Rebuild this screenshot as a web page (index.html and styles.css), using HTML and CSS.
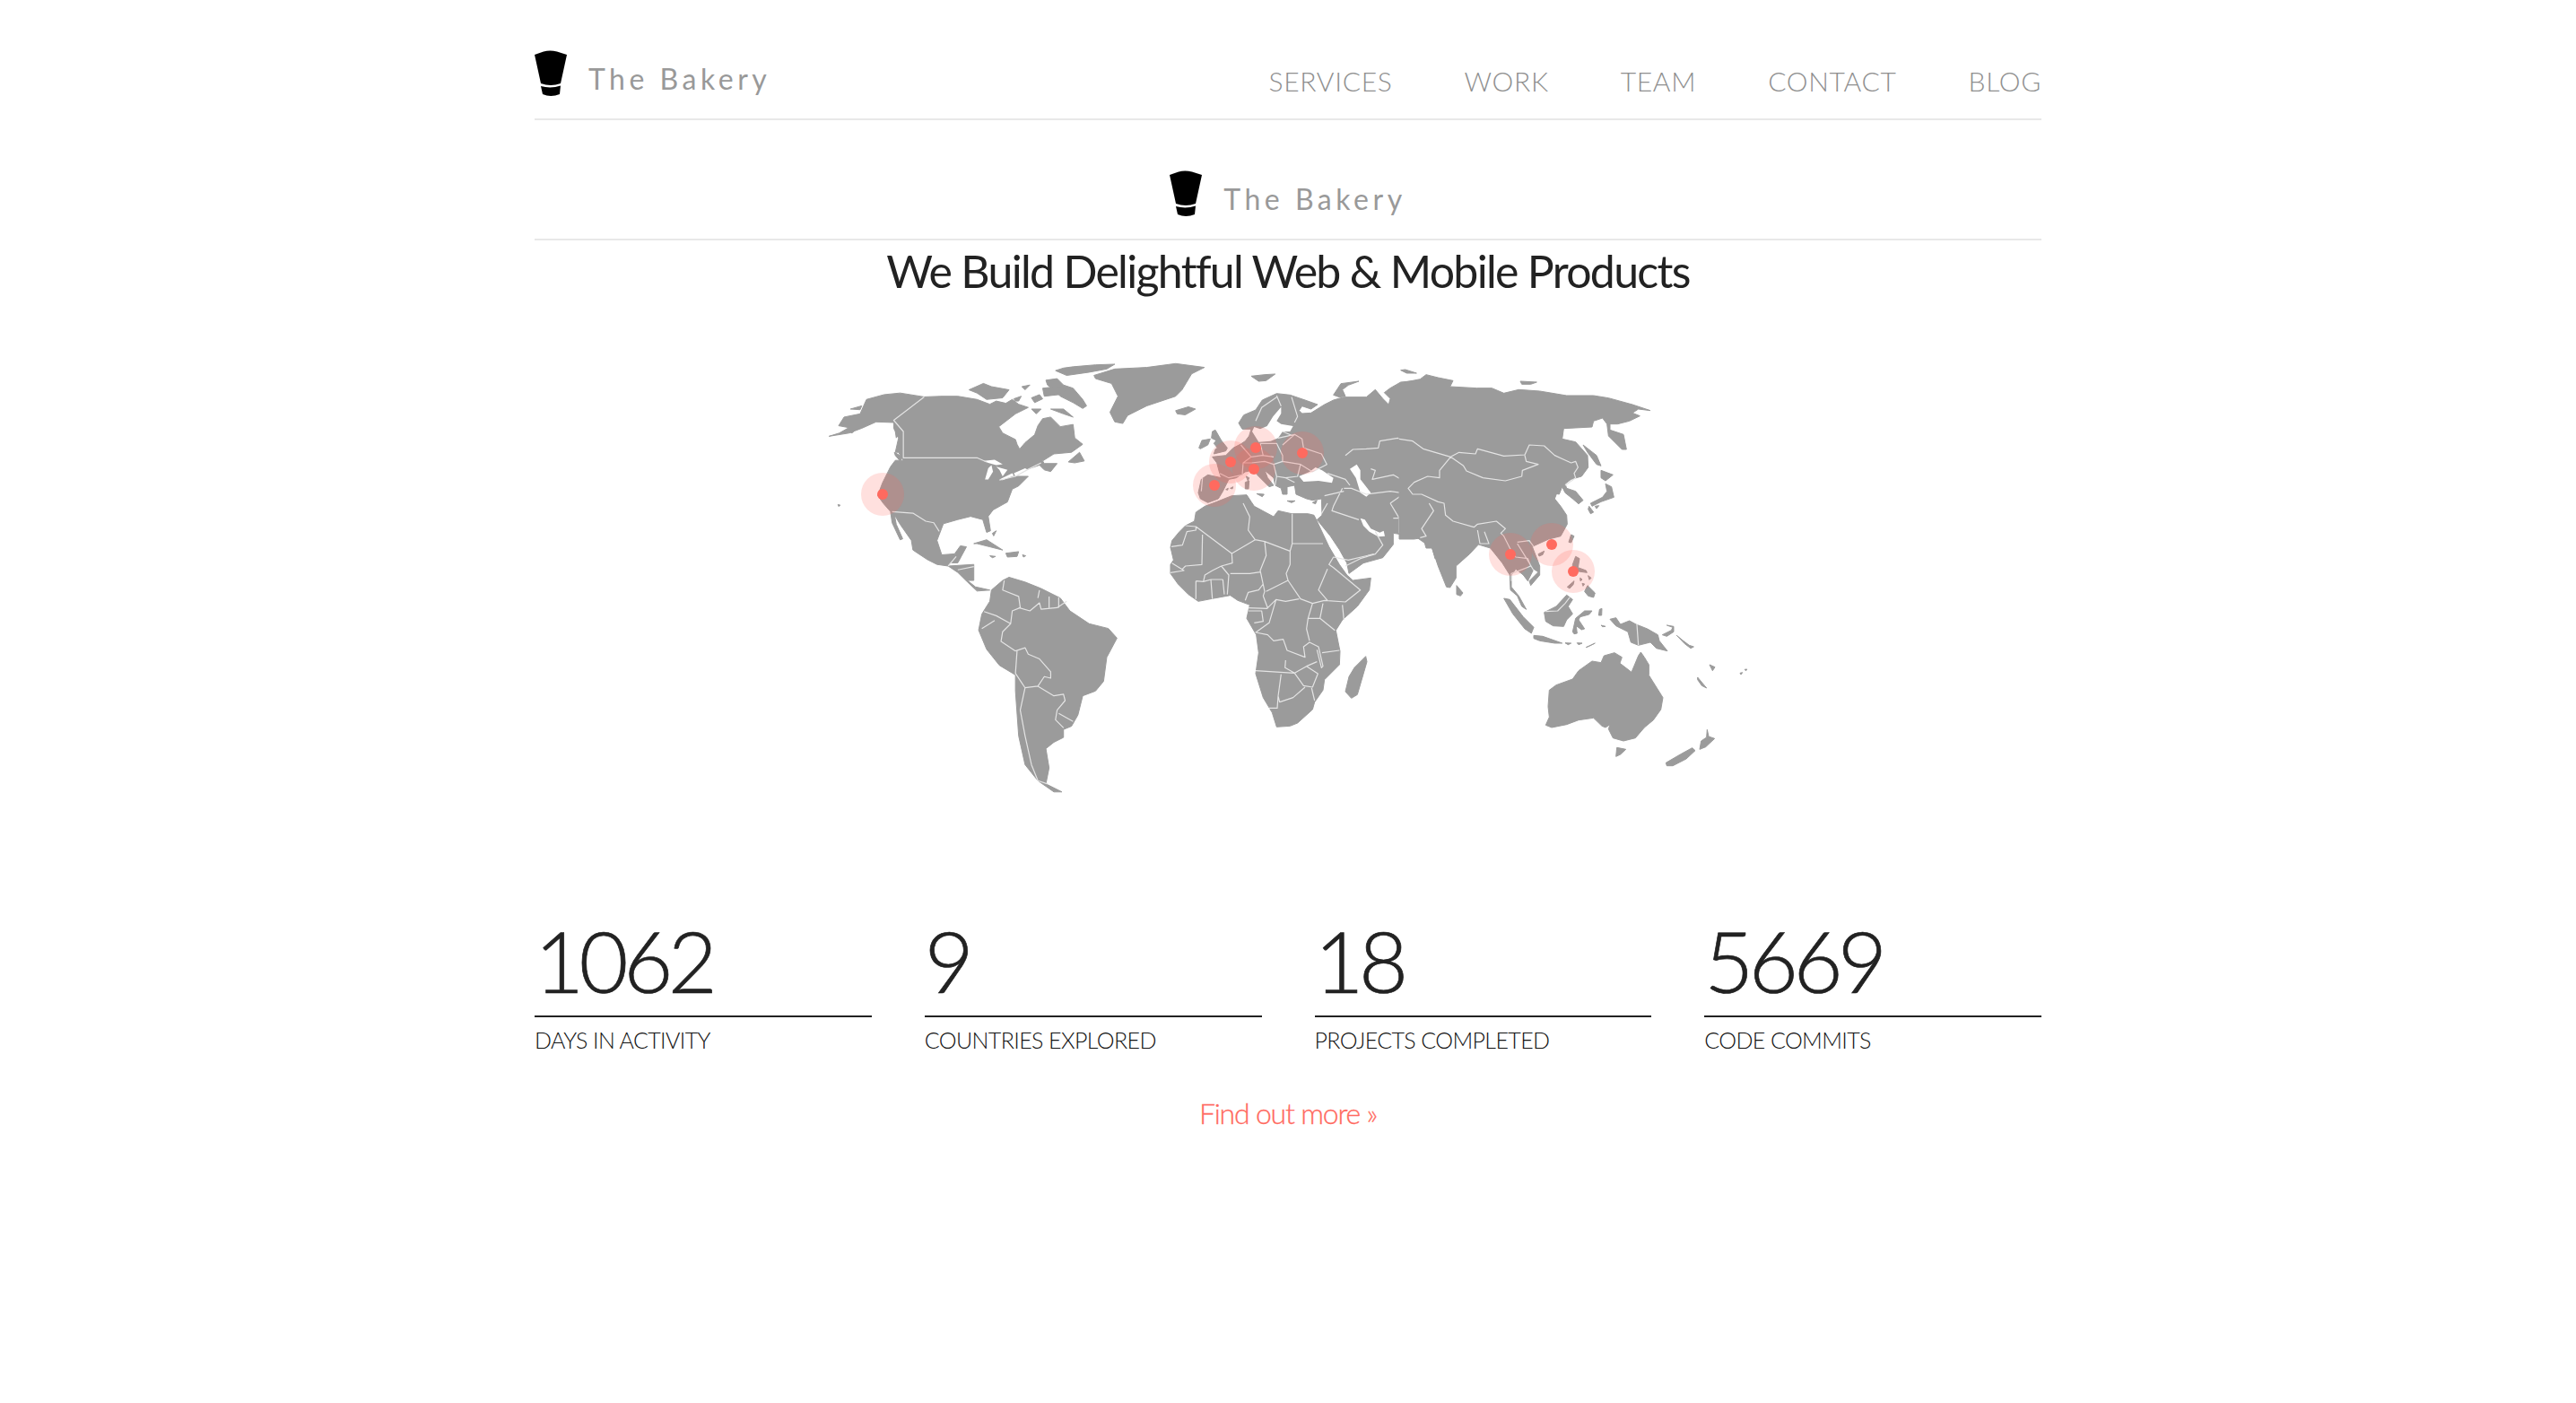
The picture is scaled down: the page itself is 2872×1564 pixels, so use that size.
FILE: index.html
```html
<!DOCTYPE html>
<html lang="en">
<head>
<meta charset="utf-8">
<title>The Bakery</title>
<link rel="stylesheet" href="styles.css">
</head>
<body>
<div class="page">
  <header class="top">
    <a class="brand" href="#">
      <svg class="hat" viewBox="0 0 36 52"><path d="M0 5 10 1.5Q17-.5 25 1.5L36 5 29 37Q18 41 7 37Z"/><path d="M7 40Q18 43 29 39.5L28 49Q18 53 9 49Z"/></svg>
      <span class="brand-name">The Bakery</span>
    </a>
    <nav class="nav">
      <a href="#">SERVICES</a>
      <a href="#">WORK</a>
      <a href="#">TEAM</a>
      <a href="#">CONTACT</a>
      <a href="#">BLOG</a>
    </nav>
  </header>
  <div class="center-brand">
    <a class="brand" href="#">
      <svg class="hat" viewBox="0 0 36 52"><path d="M0 5 10 1.5Q17-.5 25 1.5L36 5 29 37Q18 41 7 37Z"/><path d="M7 40Q18 43 29 39.5L28 49Q18 53 9 49Z"/></svg>
      <span class="brand-name">The Bakery</span>
    </a>
  </div>
  <h1 class="headline">We Build Delightful Web &amp; Mobile Products</h1>

  <svg class="map" viewBox="900 380 1072 560" width="1072" height="560">
    <g transform="translate(900 380) scale(.35714)">
      <path class="land" d="M530 180 570 195 590 185 620 192 640 180 660 195 690 205 650 225 598 265 610 285 650 305 655 320 663 335 680 315 710 290 720 262 735 240 760 235 790 265 830 258 835 300 860 320 825 345 770 350 735 372 740 380 780 380 760 405 740 400 725 385 690 397 640 420 690 420 660 450 640 460 625 500 580 525 565 545 572 590 560 595 548 555 510 545 470 555 425 568 405 620 420 665 460 662 478 637 497 640 470 690 445 690 440 700 520 695 520 745 500 745 525 765 570 775 530 778 495 745 470 720 440 700 405 695 375 680 330 650 325 620 290 570 272 540 278 570 298 615 290 618 265 565 260 530 238 505 220 480 235 440 260 390 275 370 300 370 285 345 275 345 285 300 270 270 270 252 215 250 170 270 130 285 68 295 100 285 130 268 98 262 115 235 165 225 185 180 240 165 290 160 365 172 420 170 470 170Z"/>
      <path class="land" d="M895 105 960 85 1060 80 1150 68 1240 80 1200 100 1170 150 1150 170 1060 200 1000 230 985 255 960 250 945 220 970 170 950 130 900 115Z"/>
      <path class="land" d="M1150 215 1190 203 1212 210 1180 228 1155 225Z"/>
      <path class="land" d="M745 120 780 115 800 135 830 145 860 180 872 200 860 208 830 190 790 170 770 150 750 135Z"/>
      <path class="land" d="M830 78 900 72 960 70 935 85 880 95 810 105 775 90 800 82Z"/>
      <path class="land" d="M505 150 550 130 575 140 630 150 610 175 560 180 530 160Z"/>
      <path class="land" d="M645 178 668 170 660 185 650 185Z"/>
      <path class="land" d="M670 140 695 135 680 150Z"/>
      <path class="land" d="M735 145 780 140 810 150 785 165 740 170Z"/>
      <path class="land" d="M700 210 730 210 715 225Z"/>
      <path class="land" d="M760 210 800 210 830 235 800 225Z"/>
      <path class="land" d="M700 175 725 165 735 178 710 190Z"/>
      <path class="land" d="M815 375 850 345 865 372 835 378Z"/>
      <path class="land" d="M272 345 298 360 290 372 275 355Z"/>
      <path class="land" d="M275 280 285 290 278 300Z"/>
      <path class="land" d="M135 210 170 200 165 212Z"/>
      <path class="land" d="M130 280 150 275 140 285Z"/>
      <path class="land" d="M520 630 560 618 610 650 570 640 530 630Z"/>
      <path class="land" d="M620 660 660 655 655 670 625 672Z"/>
      <path class="land" d="M672 665 682 668 675 672Z"/>
      <path class="land" d="M570 668 588 670 578 674Z"/>
      <path class="land" d="M578 598 590 590 582 606Z"/>
      <path class="land" d="M96 508 103 510 98 514Z"/>
      <path class="land" d="M575 775 610 745 630 735 680 750 730 770 790 800 820 840 880 880 940 895 967 925 935 985 925 1060 900 1090 860 1105 845 1165 825 1200 800 1210 800 1235 770 1250 745 1270 755 1330 745 1380 795 1405 770 1405 720 1370 680 1320 660 1230 650 1090 650 1040 600 1010 560 960 535 900 545 850 570 810Z"/>
      <path class="sea" d="M550 372 585 368 610 382 590 385 565 378Z"/>
      <path class="sea" d="M565 395 575 385 580 405 565 430 555 430Z"/>
      <path class="sea" d="M590 390 625 400 610 420 600 400Z"/>
      <path class="sea" d="M600 430 640 410 645 418 610 432Z"/>
      <path class="sea" d="M645 410 680 395 690 400 650 420Z"/>
      <path class="b" d="M365 172 270 245 300 280 300 362 530 362 560 375M600 432 650 420 690 398 730 378M265 530 330 535 370 560 395 565 412 592M440 700 465 670M470 712 520 702"/>
      <path class="b" d="M615 745 610 775 660 795 665 830 640 840 635 880 610 905 605 935 650 965M660 830 695 840 725 815 730 835 780 830 810 810M725 775 720 800M755 795 755 830M785 798 785 830M552 842 590 855 635 880M545 895 585 870M650 965 680 955 690 975 725 990 760 1030 760 1050 740 1045 720 1075 680 1080 650 1035 655 965M680 1080 665 1150 680 1230 700 1320 720 1370 750 1380M720 1075 770 1105 800 1100 805 1120 780 1150 775 1180 800 1205M785 1160 830 1185"/>
    </g>

    <g transform="translate(1320 400) scale(.33333)">
      <path class="land" d="M48 445 58 400 80 385 125 395 118 375 110 345 95 325 140 320 165 295 190 282 205 272 218 255 225 232 195 232 183 212 200 185 240 168 262 135 310 113 355 118 405 135 447 150 425 165 395 155 385 170 395 180 425 178 470 150 500 135 535 125 610 125 640 100 665 130 685 150 690 130 670 110 690 95 725 75 800 68 840 65 840 665 830 630 775 592 700 580 700 618 665 662 600 680 552 715 545 680 520 635 490 590 445 535 462 520 460 465 430 470 410 465 375 450 370 420 345 425 345 450 330 450 325 430 305 420 300 395 270 370 280 395 300 420 285 425 245 385 235 368 205 375 175 395 150 400 130 440 115 465 80 478 55 465Z"/>
      <path class="land" d="M500 118 525 80 585 72 550 85 530 100 540 122 520 125Z"/>
      <path class="land" d="M225 55 270 50 305 48 275 70 250 72Z"/>
      <path class="land" d="M95 240 105 235 125 270 145 295 140 305 100 315 105 300 112 295 100 280 108 270 92 262Z"/>
      <path class="land" d="M50 295 60 270 88 265 80 285 55 298Z"/>
      <path class="land" d="M243 448 268 450 262 458Z"/>
      <path class="land" d="M205 410 218 405 216 432 205 432Z"/>
      <path class="land" d="M208 390 218 395 214 405Z"/>
      <path class="land" d="M140 434 148 430 146 436Z"/>
      <path class="land" d="M155 430 164 425 162 432Z"/>
      <path class="land" d="M345 472 372 472 360 478Z"/>
      <path class="land" d="M430 478 445 470 440 482Z"/>
      <path class="sea" d="M325 158 298 190 278 222 255 232 235 225 228 240 250 275 290 272 315 262 330 240 355 240 365 222 325 215 310 205 325 180Z"/>
      <path class="sea" d="M385 390 420 375 440 360 462 370 500 395 495 412 450 405 400 408Z"/>
      <path class="sea" d="M555 365 578 350 590 370 590 400 625 445 610 458 590 445 575 395Z"/>
      <path class="sea" d="M590 530 605 535 625 565 655 578 668 572 672 590 650 592 620 575 600 555Z"/>
      <path class="b" d="M540 320 565 300 610 298 650 295 655 272 715 262 770 285 840 320M625 365 640 370 630 400 700 385 760 420 790 420 840 412M480 380 540 400 555 420M535 430 560 430 610 450 690 440 760 450 750 410M690 480 720 530 720 580M690 480 740 445 800 455 790 490 750 530 700 530M790 490 835 470 795 560 810 590 785 595M530 430 500 490 495 505 540 520 585 535M480 480 460 515M470 455 535 440M540 690 590 665 640 650 665 620 640 575M330 285 370 250 395 265 400 295 460 315 478 350 430 375 390 350 330 340M255 280 310 280 330 320 330 340 300 350 270 340 225 345 200 345M190 285 225 325 198 345 195 385 150 395M120 380 150 395M225 325 262 320 300 325M255 280 265 320M300 350 310 390 305 420M330 340 390 350 380 390 340 395 310 390M340 395 370 410M62 395 58 440M310 120 325 155M360 125 380 190 370 210M310 125 260 160 240 205M330 240 365 255M315 262 370 250"/>
    </g>

    <g transform="translate(1300 560) scale(.33333)">
      <path class="land" d="M15 148 20 125 45 95 65 75 95 60 100 30 130 10 170-5 220-25 270-28 285-5 295 10 360 45 375 25 420 35 475 35 495 40 505 60 545 145 580 205 605 240 625 258 685 250 680 290 640 345 590 390 568 425 582 495 580 540 530 590 525 625 497 665 490 690 440 735 415 745 370 748 355 700 325 650 300 570 310 500 302 440 270 385 280 340 240 325 215 308 160 318 108 328 75 305 40 270 15 235 15 205 25 190 18 160Z"/>
      <path class="land" d="M668 512 672 530 640 640 620 652 600 630 612 580 630 550Z"/>
      <path class="b" d="M65 75 100 78 100 90 70 95 55 140 18 145M100 78 220 168 298 122 330 128 415 160 422 135 525 135M258 0 280 45 275 90 298 122M422 35 422 135M122 105 120 205 65 210 55 220M220 168 222 200 185 210 155 225 130 240 125 262M330 128 335 175 315 225 330 295 325 310M415 160 415 205 402 235 408 258 335 295M185 210 210 240 205 305M215 235 280 235 315 230M265 325 275 298 310 290 325 270M408 258 450 320 490 335 530 325 600 330 650 290 560 215 545 205 560 180 610 190 695 170M540 220 510 290 540 325M325 310 340 350 368 322 400 328 445 320M490 335 475 385 470 420 480 460M525 335 515 385 475 385M515 385 565 425M590 340 595 390M368 322 345 400 300 432 340 440 360 460 392 455 405 492 465 515 460 480 480 465 510 480 525 545 520 550 505 490M522 500 580 492M300 560 430 568 470 545 505 530M400 525 398 550 430 568 460 610 490 615 508 570 470 545M385 572 375 645 380 665 425 650 465 615M375 645 372 685 345 685M487 618 497 660M275 350 340 352M275 360 320 360 325 395 295 400M100 260 100 320M150 255 155 320M190 255 195 305M150 255 190 255M100 260 125 262 150 255M20 200 60 225 15 232"/>
    </g>

    <g transform="translate(1560 400) scale(.33333)">
      <path class="land" d="M0 85 20 75 70 65 90 50 130 60 180 70 170 90 260 95 310 95 350 112 400 100 470 105 560 120 650 120 700 128 780 150 840 170 800 165 780 178 805 188 770 205 730 215 705 215 705 235 750 250 760 300 745 300 700 255 695 215 680 195 650 205 645 225 550 230 545 265 590 275 630 320 632 360 610 390 575 400 555 415 560 430 590 440 615 470 600 482 580 465 555 445 545 425 535 450 510 445 495 438 515 415 535 425 520 465 540 490 560 520 562 550 540 590 500 600 445 625 470 690 470 720 440 755 435 740 465 710 450 700 430 740 415 720 390 700 375 720 375 760 400 790 425 835 410 825 395 790 372 770 370 720 345 680 305 630 265 618 235 650 190 690 190 730 170 762 158 760 130 690 110 630 90 630 80 595 50 600 0 600Z"/>
      <path class="land" d="M615 285 660 320 675 355 660 350 630 310Z"/>
      <path class="land" d="M675 370 715 385 690 405 675 395Z"/>
      <path class="land" d="M690 415 710 425 718 460 675 475 645 490 640 480 680 460 695 440Z"/>
      <path class="land" d="M635 490 650 510 640 515 632 500Z"/>
      <path class="land" d="M655 490 668 488 660 498Z"/>
      <path class="land" d="M575 585 585 590 575 612 567 610Z"/>
      <path class="land" d="M465 650 485 640 480 652 468 657Z"/>
      <path class="land" d="M192 755 213 780 205 790 192 785Z"/>
      <path class="land" d="M405 72 460 75 440 82 410 82Z"/>
      <path class="land" d="M5 35 20 33 58 45 25 45Z"/>
      <path class="land" d="M590 658 603 665 598 695 625 705 628 712 600 708 580 700 580 685Z"/>
      <path class="land" d="M630 755 655 780 650 795 632 790 620 775Z"/>
      <path class="land" d="M562 760 585 740 582 752 570 765Z"/>
      <path class="land" d="M605 730 612 735 606 740Z"/>
      <path class="land" d="M612 748 620 750 615 757Z"/>
      <path class="land" d="M632 722 642 730 636 736Z"/>
      <path class="b" d="M172 325 200 310 255 315 262 298 350 322 420 318 435 285 485 288 520 320 575 345 590 340 598 360 585 380 590 395 555 420M0 265 45 272 80 298 172 325M172 325 215 355 225 372 280 395 355 405 410 390 412 370 465 350 425 340 420 320M172 325 135 370 135 395 95 390 50 410 30 430 45 450 75 450 130 475 150 480 155 520 180 540 250 560 262 550 325 540 355 565 340 580 350 590 375 640 390 660 430 665 440 690 415 700 375 715 375 740M395 610 435 605 450 625M395 615 420 655 450 705M100 480 115 505 75 565 90 590 70 595M262 570 270 615 300 615 285 575"/>
    </g>

    <g transform="translate(1620 590) scale(.33333)">
      <path class="land" d="M305 275 345 255 380 217 400 232 385 255 400 280 380 300 370 322 335 320 310 305Z"/>
      <path class="land" d="M170 228 190 232 235 290 270 325 262 345 240 330 200 280Z"/>
      <path class="land" d="M270 352 300 355 365 378 340 378 290 370 270 362Z"/>
      <path class="land" d="M375 377 395 378 385 383Z"/>
      <path class="land" d="M415 377 432 378 420 383Z"/>
      <path class="land" d="M445 392 475 378 455 388Z"/>
      <path class="land" d="M400 340 410 295 440 270 465 270 455 282 425 290 420 300 440 330 430 333 412 320 415 345 405 347Z"/>
      <path class="land" d="M487 285 490 265 498 262 497 285Z"/>
      <path class="land" d="M495 318 510 322 500 323Z"/>
      <path class="land" d="M525 298 545 293 560 315 590 303 612 315 650 330 685 350 690 370 717 404 680 395 660 375 620 385 595 375 585 340 545 320Z"/>
      <path class="land" d="M700 350 730 335 735 325 715 318 738 322 738 340 715 355Z"/>
      <path class="land" d="M748 352 770 370 790 385 805 390 795 395 775 380Z"/>
      <path class="land" d="M858 450 876 458 868 470Z"/>
      <path class="land" d="M818 492 848 528 832 520 818 500Z"/>
      <path class="land" d="M960 478 968 476 963 483Z"/>
      <path class="land" d="M975 466 983 465 980 470Z"/>
      <path class="land" d="M322 535 345 518 400 498 420 470 465 438 495 443 505 420 540 410 565 425 558 445 597 475 620 420 628 408 640 425 655 450 655 485 680 525 702 560 695 600 670 635 640 660 610 695 570 705 535 695 520 665 525 650 510 660 498 655 470 628 420 635 380 650 330 660 310 652 322 625 318 590Z"/>
      <path class="land" d="M548 727 578 733 560 750 545 757Z"/>
      <path class="land" d="M850 667 855 690 875 697 845 725 825 733 830 705 848 693Z"/>
      <path class="land" d="M800 728 810 737 780 765 735 788 715 788 712 778 760 750Z"/>
      <path class="b" d="M310 272 350 270 375 245 390 225M615 315 620 385"/>
    </g>

    <g class="pins">
      <circle class="halo" cx="984" cy="550" r="24"/>
      <circle class="halo" cx="1354" cy="540" r="24"/>
      <circle class="halo" cx="1372" cy="514" r="24"/>
      <circle class="halo" cx="1400" cy="498" r="24"/>
      <circle class="halo" cx="1398" cy="522" r="24"/>
      <circle class="halo" cx="1452" cy="504" r="24"/>
      <circle class="halo" cx="1684" cy="617" r="24"/>
      <circle class="halo" cx="1730" cy="606" r="24"/>
      <circle class="halo" cx="1754" cy="636" r="24"/>
      <circle class="dot" cx="984" cy="550" r="6"/>
      <circle class="dot" cx="1354" cy="540" r="6"/>
      <circle class="dot" cx="1372" cy="514" r="6"/>
      <circle class="dot" cx="1400" cy="498" r="6"/>
      <circle class="dot" cx="1398" cy="522" r="6"/>
      <circle class="dot" cx="1452" cy="504" r="6"/>
      <circle class="dot" cx="1684" cy="617" r="6"/>
      <circle class="dot" cx="1730" cy="606" r="6"/>
      <circle class="dot" cx="1754" cy="636" r="6"/>
    </g>
  </svg>

  <section class="stats">
    <div class="stat"><div class="num">1062</div><div class="label">DAYS IN ACTIVITY</div></div>
    <div class="stat"><div class="num">9</div><div class="label">COUNTRIES EXPLORED</div></div>
    <div class="stat"><div class="num">18</div><div class="label">PROJECTS COMPLETED</div></div>
    <div class="stat"><div class="num">5669</div><div class="label">CODE COMMITS</div></div>
  </section>
  <p class="more"><a href="#">Find out more »</a></p>
</div>
</body>
</html>
```

FILE: styles.css
```css
* { box-sizing: border-box; }
html, body { margin: 0; background: #fff; }
body { font-family: Lato, "Liberation Sans", sans-serif; color: #222; }
a { text-decoration: none; color: inherit; }
.page { width: 1680px; margin: 0 auto; padding-bottom: 280px; }
.top { height: 134px; padding-top: 56px; display: flex; justify-content: space-between; border-bottom: 2px solid #e8e8e8; }
.brand { display: flex; align-items: flex-start; gap: 24px; }
.hat { width: 36px; height: 52px; fill: #000; flex: none; }
.brand-name { font-size: 32px; line-height: 40px; margin-top: 12px; letter-spacing: 4.5px; color: #999; white-space: nowrap; }
.nav { display: flex; gap: 80px; padding-top: 16px; }
.nav a { font-size: 30px; line-height: 36px; font-weight: 300; letter-spacing: .7px; color: #8f8f8f; }
.center-brand { height: 134px; padding-top: 56px; display: flex; justify-content: center; border-bottom: 2px solid #e8e8e8; }
.headline { margin: 0; height: 113px; padding-top: 4px; font-size: 50px; line-height: 60px; font-weight: 400; text-align: center; color: #222; letter-spacing: -1.7px; }
.map { display: block; margin: 0 auto; }
.land { fill: #9b9b9b; stroke: #9b9b9b; stroke-width: 1; stroke-linejoin: round; vector-effect: non-scaling-stroke; }
.sea { fill: #fff; stroke: none; }
.b { fill: none; stroke: #e4e4e4; stroke-width: 1.2; stroke-linejoin: round; vector-effect: non-scaling-stroke; }
.halo { fill: #ff6459; fill-opacity: .2; }
.dot { fill: #ff6a5f; }
.stats { display: grid; grid-template-columns: repeat(4, 1fr); column-gap: 59px; margin-top: 76px; }
.num { height: 117px; border-bottom: 2px solid #222; font-size: 95px; line-height: 106px; font-weight: 300; -webkit-text-stroke: .7px #222; letter-spacing: -5.5px; color: #222; }
.label { margin-top: 7px; font-size: 25px; line-height: 36px; font-weight: 300; letter-spacing: -.6px; color: #111; }
.more { margin: 42px 0 0; text-align: center; font-size: 32px; line-height: 44px; font-weight: 300; -webkit-text-stroke: .3px #ff6a5f; letter-spacing: -1.2px; color: #ff6a5f; }
```
